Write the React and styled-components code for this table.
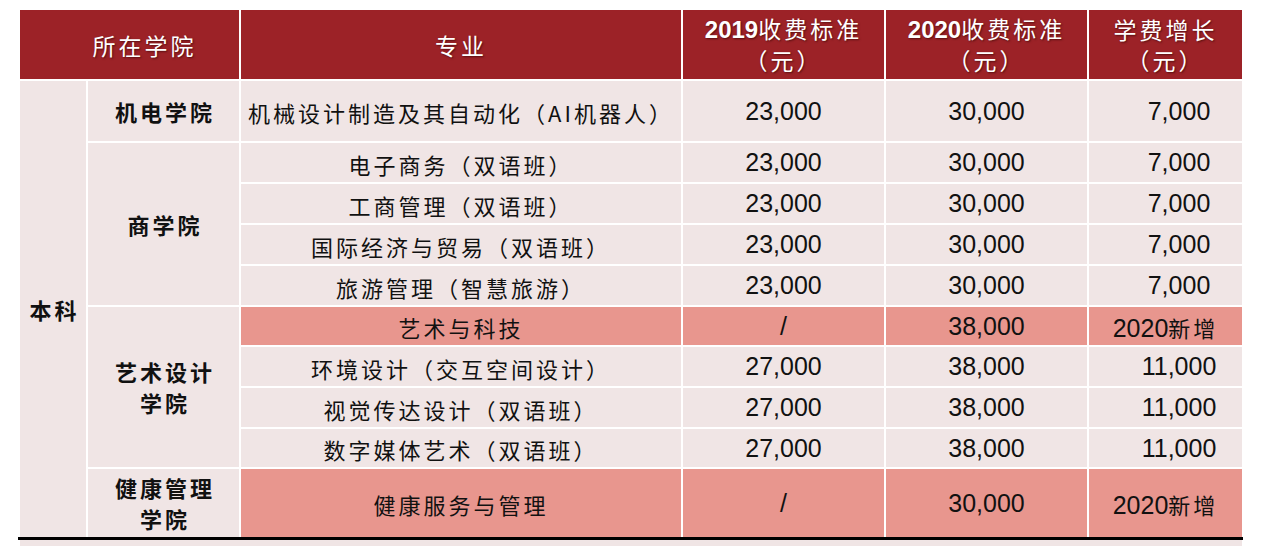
import React from "react";
import styled, { createGlobalStyle } from "styled-components";

const GlobalStyle = createGlobalStyle`
  html, body { margin: 0; padding: 0; background: #ffffff; overflow: hidden; }
  body { font-family: "Liberation Sans", "Noto Sans CJK SC", sans-serif; }
`;

const HAN = `"Noto Sans CJK SC", sans-serif`;
const NUM = `"Liberation Sans", "Noto Sans CJK SC", sans-serif`;

const rows = [
  { major: "机械设计制造及其自动化（AI机器人）", y2019: "23,000", y2020: "30,000", inc: "7,000" },
  { major: "电子商务（双语班）", y2019: "23,000", y2020: "30,000", inc: "7,000" },
  { major: "工商管理（双语班）", y2019: "23,000", y2020: "30,000", inc: "7,000" },
  { major: "国际经济与贸易（双语班）", y2019: "23,000", y2020: "30,000", inc: "7,000" },
  { major: "旅游管理（智慧旅游）", y2019: "23,000", y2020: "30,000", inc: "7,000" },
  { major: "艺术与科技", y2019: "/", y2020: "38,000", inc: "new", hot: true },
  { major: "环境设计（交互空间设计）", y2019: "27,000", y2020: "38,000", inc: "11,000" },
  { major: "视觉传达设计（双语班）", y2019: "27,000", y2020: "38,000", inc: "11,000" },
  { major: "数字媒体艺术（双语班）", y2019: "27,000", y2020: "38,000", inc: "11,000" },
  { major: "健康服务与管理", y2019: "/", y2020: "30,000", inc: "new", hot: true },
];

const colleges = [
  { lines: ["机电学院"], from: 2, span: 1 },
  { lines: ["商学院"], from: 3, span: 4 },
  { lines: ["艺术设计", "学院"], from: 7, span: 4 },
  { lines: ["健康管理", "学院"], from: 11, span: 1 },
];

export default function App() {
  return (
    <>
      <GlobalStyle />
      <Page>
        <Table>
          <HeadCell $col="1 / span 2" $row={1} $pad="0 0 0 30px">
            <HeadText>所在学院</HeadText>
          </HeadCell>
          <HeadCell $col={3} $row={1}>
            <HeadText>专业</HeadText>
          </HeadCell>
          <HeadCell $col={4} $row={1}>
            <HeadLine><Year>2019</Year><HeadText>收费标准</HeadText></HeadLine>
            <HeadLine><HeadText>（元）</HeadText></HeadLine>
          </HeadCell>
          <HeadCell $col={5} $row={1}>
            <HeadLine><Year>2020</Year><HeadText>收费标准</HeadText></HeadLine>
            <HeadLine><HeadText>（元）</HeadText></HeadLine>
          </HeadCell>
          <HeadCell $col={6} $row={1}>
            <HeadLine><HeadText>学费增长</HeadText></HeadLine>
            <HeadLine><HeadText>（元）</HeadText></HeadLine>
          </HeadCell>

          <Cell $col={1} $row="2 / span 10">
            <Label>本科</Label>
          </Cell>

          {colleges.map((c) => (
            <Cell key={c.lines.join("")} $col={2} $row={`${c.from} / span ${c.span}`}>
              <College>
                {c.lines.map((l) => (
                  <div key={l}>{l}</div>
                ))}
              </College>
            </Cell>
          ))}

          {rows.map((r, i) => (
            <React.Fragment key={r.major}>
              <Cell $col={3} $row={i + 2} $hot={r.hot}>
                <Major>{r.major}</Major>
              </Cell>
              <Cell $col={4} $row={i + 2} $hot={r.hot}>
                <Num>{r.y2019}</Num>
              </Cell>
              <Cell $col={5} $row={i + 2} $hot={r.hot}>
                <Num>{r.y2020}</Num>
              </Cell>
              <Cell $col={6} $row={i + 2} $hot={r.hot} $pad={r.inc === "new" ? "0" : "0 0 0 27px"}>
                {r.inc === "new" ? (
                  <Num>2020<Major>新增</Major></Num>
                ) : (
                  <Num>{r.inc}</Num>
                )}
              </Cell>
            </React.Fragment>
          ))}
        </Table>
        <Rule />
        <NextRow />
      </Page>
    </>
  );
}

const Page = styled.div`
  padding: 10px 0 0 20px;
  width: 1246px;
`;

const Table = styled.div`
  display: grid;
  grid-template-columns: 66px 151px 440px 201px 201px 153px;
  grid-template-rows: 69px 60px 39px 39px 39px 39px 38px 39px 39px 38px 68px;
  gap: 2px;
  width: 1222px;
  background: #ffffff;
`;

const Cell = styled.div`
  grid-column: ${(p) => p.$col};
  grid-row: ${(p) => p.$row};
  background: ${(p) => (p.$hot ? "#e8968e" : "#f0e5e5")};
  color: #111111;
  display: flex;
  align-items: center;
  justify-content: center;
  padding: ${(p) => p.$pad || "0"};
  overflow: hidden;
  white-space: nowrap;
`;

const HeadCell = styled(Cell)`
  background: #9c2227;
  color: #ffffff;
  flex-direction: column;
  text-shadow: 1px 1px 2px rgba(40, 0, 0, 0.6);
`;

const HeadLine = styled.div`
  display: flex;
  align-items: baseline;
  justify-content: center;
  line-height: 31px;
`;

const HeadText = styled.span`
  font-family: ${HAN};
  font-size: 23px;
  letter-spacing: 3px;
`;

const Year = styled.span`
  font-family: "Liberation Sans", sans-serif;
  font-weight: bold;
  font-size: 24px;
`;

const Label = styled.div`
  font-family: ${HAN};
  font-weight: bold;
  font-size: 22px;
  letter-spacing: 3px;
  margin-left: 3px;
`;

const College = styled.div`
  font-family: ${HAN};
  font-weight: bold;
  font-size: 22px;
  letter-spacing: 3px;
  line-height: 31px;
  text-align: center;
  margin-left: 3px;
`;

const Major = styled.span`
  font-family: ${HAN};
  font-size: 22px;
  letter-spacing: 3px;
  padding-top: 2px;
`;

const Num = styled.span`
  font-family: ${NUM};
  font-size: 25px;
  display: inline-flex;
  align-items: baseline;
`;

const Rule = styled.div`
  width: 1225px;
  height: 3px;
  margin-left: -2px;
  background: #000000;
`;

const NextRow = styled.div`
  width: 1222px;
  height: 20px;
  background: #f0e5e5;
`;
